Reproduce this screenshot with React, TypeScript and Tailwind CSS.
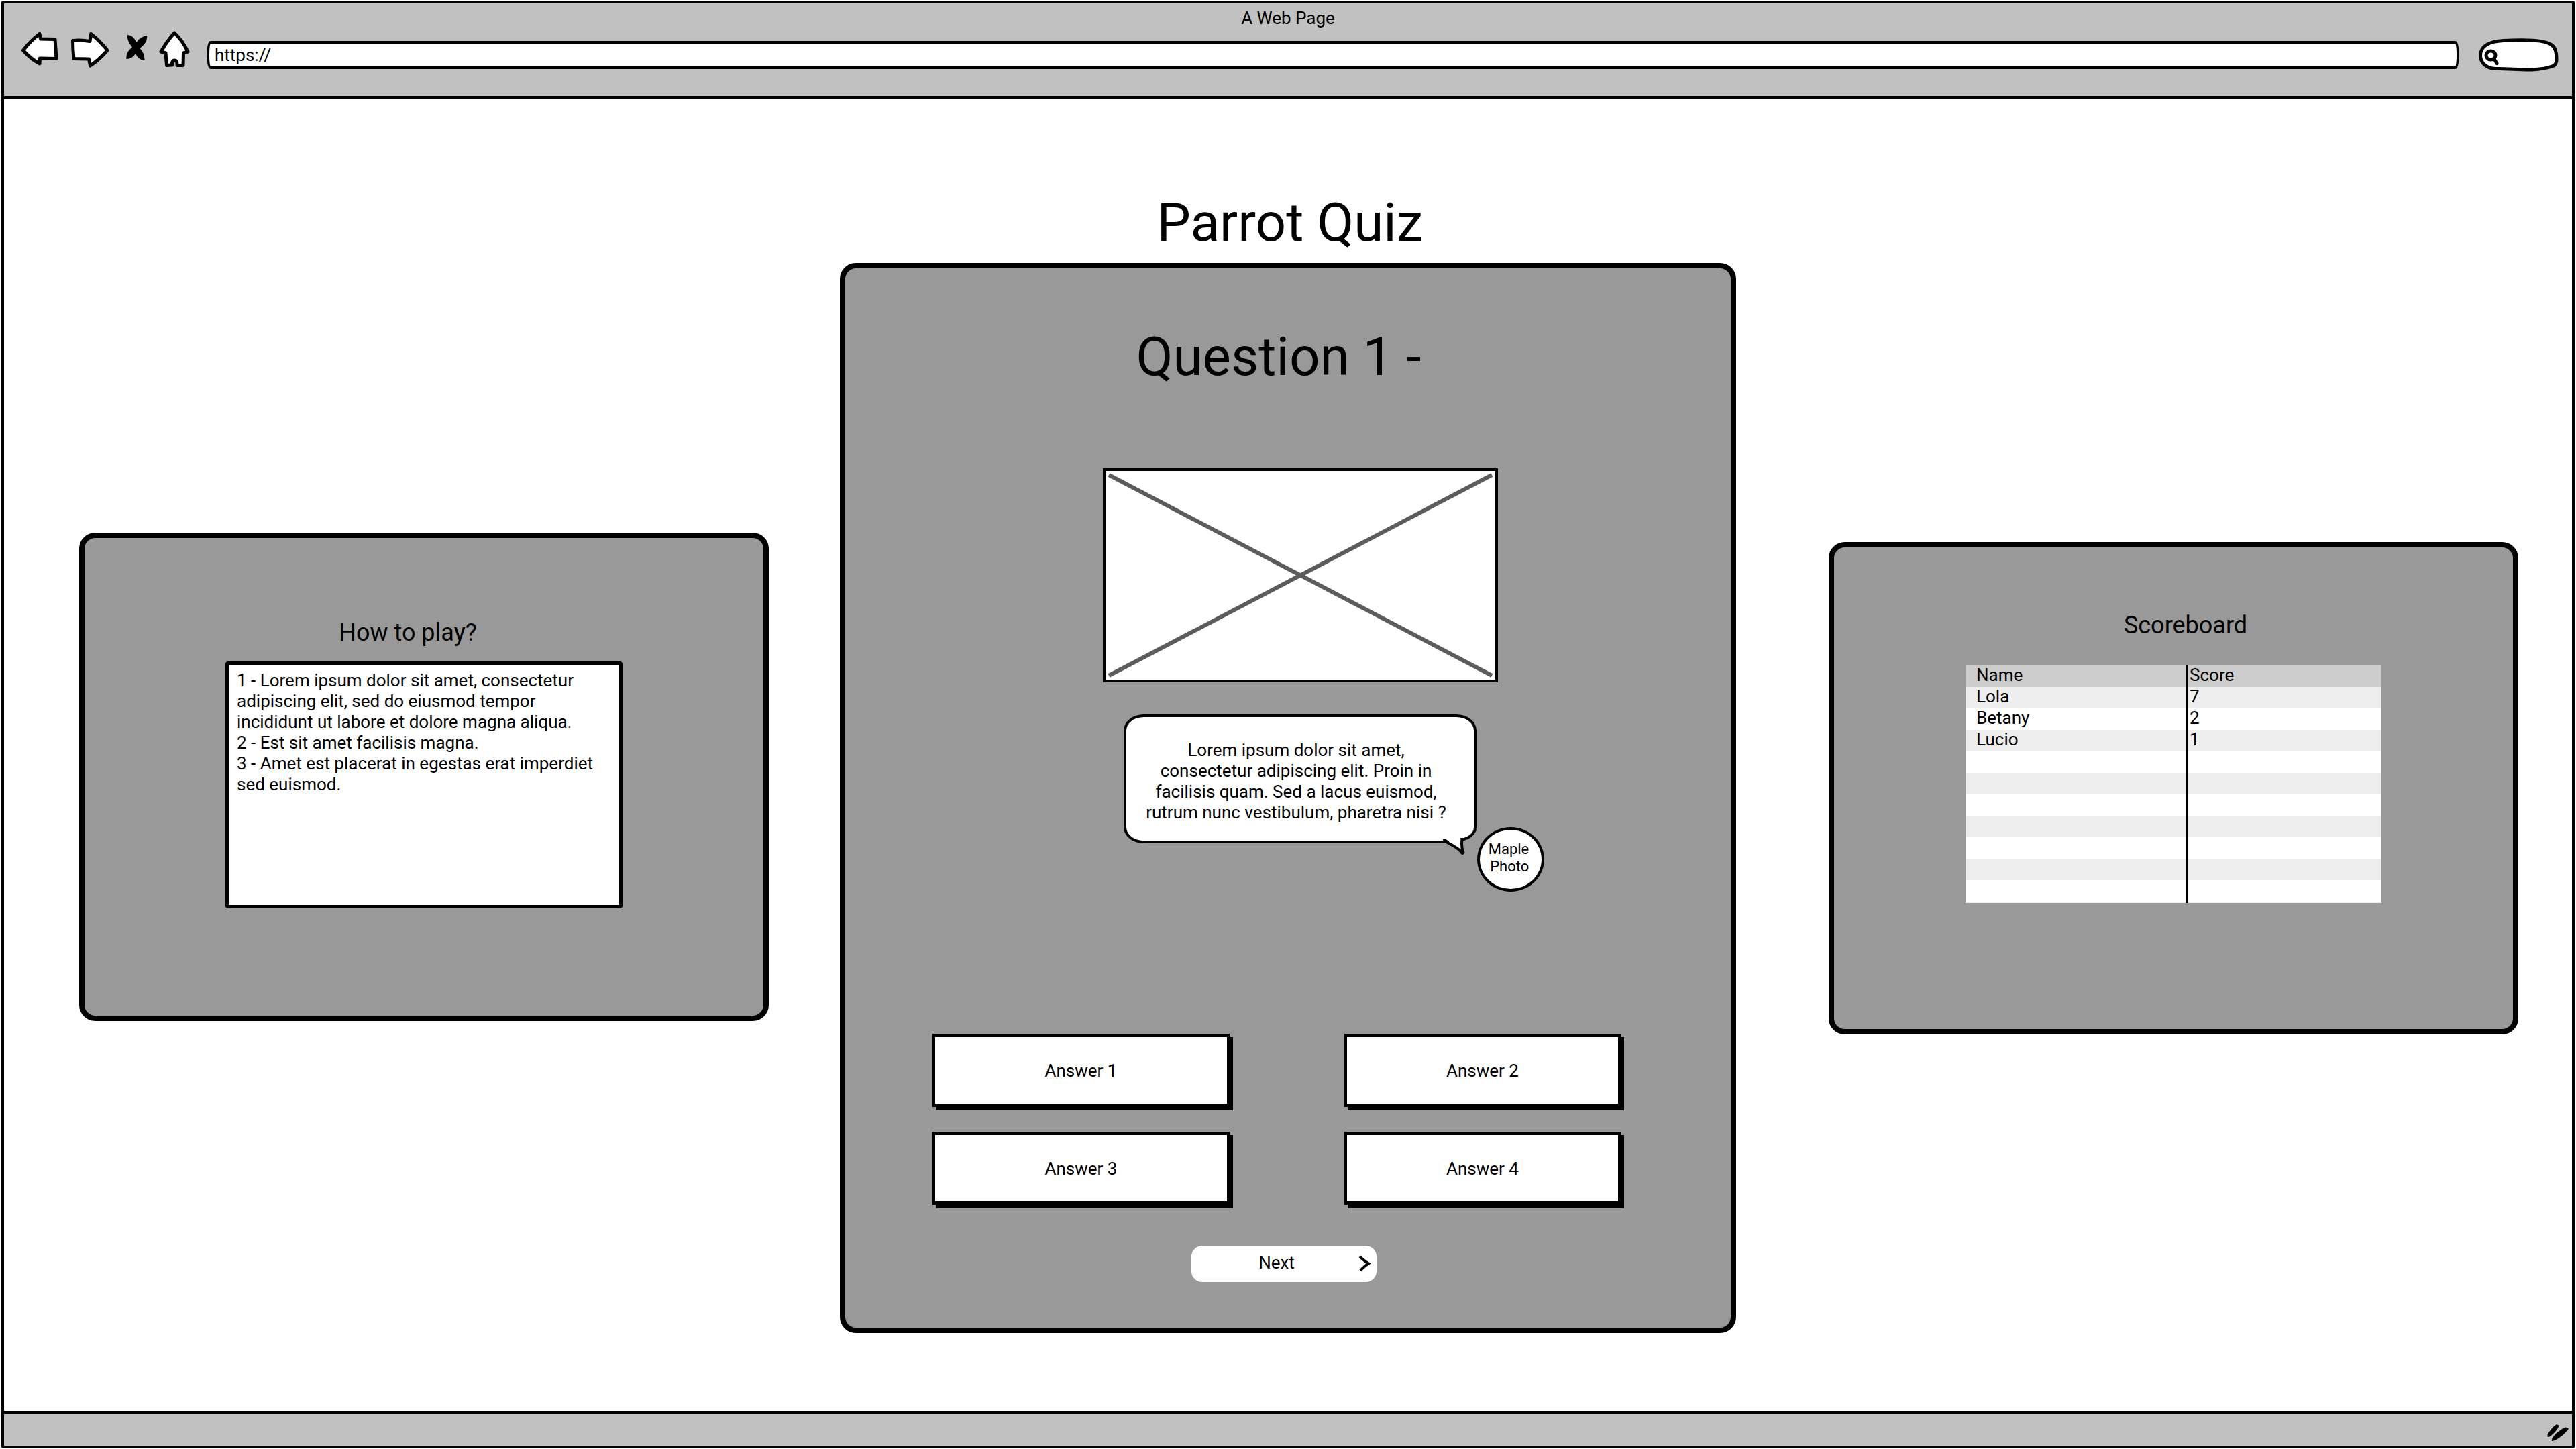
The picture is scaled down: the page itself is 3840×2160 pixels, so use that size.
import type { ReactNode } from "react";

const answers = ["Answer 1", "Answer 2", "Answer 3", "Answer 4"];

const scores: [string, string][] = [
  ["Lola", "7"],
  ["Betany", "2"],
  ["Lucio", "1"],
  ["", ""],
  ["", ""],
  ["", ""],
  ["", ""],
  ["", ""],
  ["", ""],
  ["", ""],
];

const rules = [
  "1 - Lorem ipsum dolor sit amet, consectetur adipiscing elit, sed do eiusmod tempor incididunt ut labore et dolore magna aliqua.",
  "2 - Est sit amet facilisis magna.",
  "3 - Amet est placerat in egestas erat imperdiet sed euismod.",
].join("\n");

function ToolButton({ label, children }: { label: string; children: ReactNode }) {
  return (
    <button type="button" aria-label={label} className="block shrink-0">
      {children}
    </button>
  );
}

function Toolbar() {
  return (
    <header className="border-b-[5px] border-black bg-[#c1c1c1] pt-1 pb-9">
      <p className="text-center text-[26px] leading-9">A Web Page</p>
      <div className="flex items-start gap-4 pr-5 pl-[26px]">
        <ToolButton label="Back">
          <svg width="56" height="56" viewBox="32 45 56 56" fill="white" stroke="black" strokeWidth="5" strokeLinejoin="round" strokeLinecap="round">
            <path d="M34.500 75 Q46 60 59 50.500 L60.500 58 L82 58.500 Q83 73 84 87.500 L59.500 87 L59 95 Q46 88 34.500 75 Z" />
          </svg>
        </ToolButton>
        <ToolButton label="Forward">
          <svg width="60" height="56" viewBox="104 45 60 56" fill="white" stroke="black" strokeWidth="5" strokeLinejoin="round" strokeLinecap="round">
            <path d="M108.500 60.500 Q121 59 134 61.500 L135.500 50.500 Q149 61 160 75 Q148 89 134.500 98 L132.500 88 L110 87.500 Q108.500 74 108.500 60.500 Z" />
          </svg>
        </ToolButton>
        <ToolButton label="Stop">
          <svg width="40" height="56" viewBox="180 45 40 56">
            <path d="M190 52 Q198 52 203.500 63 Q209 54 219 53.500 Q220.500 63 208.500 72 Q216 80 215.500 90 Q206 89.500 202 80 Q197 88 188.500 88 Q187 78 197 70.500 Q189 61 190 52 Z" />
          </svg>
        </ToolButton>
        <ToolButton label="Home">
          <svg width="48" height="56" viewBox="236 45 48 56" fill="white" stroke="black" strokeWidth="5" strokeLinejoin="round" strokeLinecap="round">
            <path d="M260 49 Q272 60 280 77 L273.500 79 L273 97.500 L264 97.500 Q264.500 90 260 90 Q256 90 256.500 97 L248.500 97.500 L247 79 L240 77 Q249 61 260 49 Z" />
          </svg>
        </ToolButton>
        <input
          type="text"
          aria-label="Address"
          defaultValue="https://"
          className="mt-4 ml-2 h-[42px] min-w-0 flex-1 rounded-[6px/20px] border-4 border-black bg-white px-2 text-[26px] leading-8 outline-none"
        />
        <div className="relative mt-3 ml-3 h-[50px] w-[120px] shrink-0">
          <svg className="absolute inset-0" width="120" height="50" viewBox="3694 57 120 50" fill="white" stroke="black" strokeWidth="5" strokeLinecap="round" strokeLinejoin="round">
            <path d="M3720 102.500 C3706 102 3697.500 93 3697.500 83 C3697.500 68 3712 61.500 3732 60.500 C3758 59 3792 59 3803 66.500 C3809 70 3811 80 3811 88 Q3811 95 3807 98 Q3794 103 3774 104 C3758 104.500 3736 102 3720 102.500 Z" />
            <ellipse cx="3713" cy="82.500" rx="7" ry="6.500" />
            <path d="M3718 88 L3722 94.500" />
          </svg>
          <input type="search" aria-label="Search" className="relative ml-8 h-full w-20 bg-transparent text-[26px] outline-none" />
        </div>
      </div>
    </header>
  );
}

function HowToPlay() {
  return (
    <section className="col-start-1 mt-[646px] flex min-w-0 flex-col items-center rounded-3xl border-8 border-black bg-[#999999] pt-[119px] pb-40">
      <label htmlFor="rules" className="pr-12 text-4xl leading-[44px]">
        How to play?
      </label>
      <textarea
        id="rules"
        readOnly
        value={rules}
        className="mt-[21px] block h-[368px] w-[592px] max-w-full resize-none overflow-hidden rounded-[4px] border-[5px] border-black bg-white px-3 py-2 text-[26px] leading-[31px] outline-none"
      />
    </section>
  );
}

function Bubble() {
  return (
    <div className="relative mt-12 w-[526px] rounded-[30px/24px] border-4 border-black bg-white pt-[34px] pr-3 pb-[26px] text-center text-[26px] leading-[31px]">
      <p>
        Lorem ipsum dolor sit amet,
        <br />
        consectetur adipiscing elit. Proin in
        <br />
        facilisis quam. Sed a lacus euismod,
        <br />
        rutrum nunc vestibulum, pharetra nisi ?
      </p>
      <svg className="absolute -right-1 -bottom-6" width="51" height="40" viewBox="2150 1238 51 40">
        <path d="M2180 1252 Q2194 1250 2199 1238 L2202 1238 L2202 1262 L2180 1262 Z" fill="#999999" />
        <path d="M2150 1240 L2150 1254 L2158 1255 L2181 1272 L2178 1253 Q2194 1250 2197 1238 Z" fill="white" />
        <path d="M2150 1256 L2156 1256 Q2170 1263 2181 1272 Q2178 1262 2179.500 1253" fill="none" stroke="black" strokeWidth="4" strokeLinecap="round" strokeLinejoin="round" />
        <path d="M2153 1253 L2158 1256" stroke="black" strokeWidth="4" strokeLinecap="round" />
        <path d="M2180 1252.500 Q2194 1250 2199 1238" fill="none" stroke="black" strokeWidth="4" strokeLinecap="round" />
        <path d="M2177 1250 L2187 1250 Q2184 1255 2178 1255 Z" />
        <path d="M2170 1264 L2178 1274 Q2181 1277 2183.500 1272 L2180 1261 L2179 1268 Z" />
      </svg>
      <div className="absolute top-[164px] left-[523px] flex h-24 w-[100px] items-center justify-center rounded-[50%] border-4 border-black bg-white pr-1.5 pb-1 text-right text-[22px] leading-[26px]">
        <span>
          Maple
          <br />
          Photo
        </span>
      </div>
    </div>
  );
}

function Quiz() {
  return (
    <section className="col-start-3 flex min-w-0 flex-col pt-[136px] pb-28">
      <h1 className="pl-1.5 text-center text-[80px] leading-[96px]">Parrot Quiz</h1>
      <div className="mt-3 flex flex-col items-center rounded-3xl border-8 border-black bg-[#999999] pt-[84px] pb-[68px]">
        <h2 className="pr-7 text-[80px] leading-[96px]">Question 1 -</h2>
        <div className="mt-[118px] flex flex-col items-center pl-9">
          <div className="h-[319px] w-[589px] border-4 border-black bg-white">
            <svg role="img" aria-label="Question picture" className="block h-full w-full" viewBox="0 0 581 311" preserveAspectRatio="none" stroke="#5c5c5c" strokeWidth="6">
              <path d="M5 6 L576 305 M5 305 L576 6" />
            </svg>
          </div>
          <Bubble />
        </div>
        <div className="mt-[284px] grid w-full grid-cols-[443fr_412fr] gap-x-[171px] gap-y-[37px] pr-[164px] pl-[130px]">
          {answers.map((answer) => (
            <button
              key={answer}
              type="button"
              className="h-[109px] border-x-4 border-y-[5px] border-black bg-white text-[26px] leading-8 shadow-[5px_5px_0_black]"
            >
              {answer}
            </button>
          ))}
        </div>
        <div className="mt-[61px] pr-3">
          <button type="button" className="flex h-[54px] w-[276px] items-center rounded-2xl bg-white pr-2 pl-1.5 text-[26px] leading-8">
            <span className="flex-1 pb-1">Next</span>
            <svg width="20" height="26" viewBox="0 0 20 26" fill="none" stroke="black" strokeWidth="4">
              <path d="M3 2 Q9 8 16 12.500 Q10 16 4 23" />
            </svg>
          </button>
        </div>
      </div>
    </section>
  );
}

function Scoreboard() {
  return (
    <section className="col-start-5 mt-[660px] flex min-w-0 flex-col items-center rounded-3xl border-8 border-black bg-[#999999] pt-[94px] pb-[188px]">
      <h2 id="scoreboard" className="pl-9 text-4xl leading-[44px]">
        Scoreboard
      </h2>
      <table aria-labelledby="scoreboard" className="mt-[38px] w-[620px] max-w-full table-fixed text-left text-[26px] leading-7">
        <colgroup>
          <col className="w-[330px]" />
          <col />
        </colgroup>
        <thead>
          <tr className="h-8 bg-[#cccccc]">
            <th className="p-0 pl-4 align-top font-normal">Name</th>
            <th className="border-l-4 border-black p-0 pl-0.5 align-top font-normal">Score</th>
          </tr>
        </thead>
        <tbody>
          {scores.map(([name, score], i) => (
            <tr key={i} className="h-8 odd:bg-[#eeeeee] even:bg-white">
              <td className="p-0 pl-4 align-top">{name}</td>
              <td className="border-l-4 border-black p-0 pl-0.5 align-top">{score}</td>
            </tr>
          ))}
          <tr className="h-0.5 bg-[#eeeeee]">
            <td className="p-0" />
            <td className="border-l-4 border-black p-0" />
          </tr>
        </tbody>
      </table>
    </section>
  );
}

export default function App() {
  return (
    <div className="flex min-h-screen flex-col bg-white px-0.5 py-px font-['Roboto',sans-serif] text-black">
      <div className="flex flex-1 flex-col rounded-[3px] border-4 border-black">
        <Toolbar />
        <main className="grid flex-1 grid-cols-[257fr_106px_334fr_138px_257fr] items-start pr-20 pl-28">
          <HowToPlay />
          <Quiz />
          <Scoreboard />
        </main>
        <footer className="flex h-[52px] items-end justify-end border-t-[5px] border-black bg-[#c1c1c1] pr-1 pb-1">
          <svg width="34" height="30" viewBox="3796 2120 34 30">
            <path d="M3798 2141 Q3796 2138 3801 2132 Q3807 2124 3811 2122 L3815 2124 Q3811 2132 3805 2137 Q3801 2141 3798 2141 Z" />
            <path d="M3804 2147 Q3803 2143 3810 2136 Q3820 2127 3825 2126.500 L3829 2128.500 Q3824 2136 3815 2142 Q3808 2147 3804 2147 Z" />
          </svg>
        </footer>
      </div>
    </div>
  );
}
